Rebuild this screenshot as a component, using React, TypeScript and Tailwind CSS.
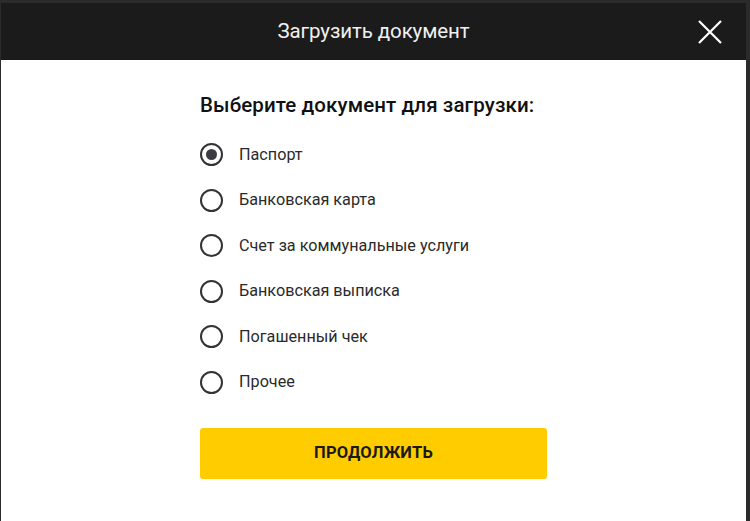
import React from 'react'

const options = [
    'Паспорт',
    'Банковская карта',
    'Счет за коммунальные услуги',
    'Банковская выписка',
    'Погашенный чек',
    'Прочее',
]

const App = () => {
    const [selected, setSelected] = React.useState(0)

    return (
        <div className="w-[750px] h-[521px] bg-[#2b2b2b] pt-[3px] pl-px pr-[4px] font-['Roboto',sans-serif]">
            <div className="h-full bg-white flex flex-col">
                <div className="h-[57px] bg-[#1b1b1b] flex items-center justify-center relative shrink-0">
                    <h2 className="text-[20.5px] text-[#f0f0f0] tracking-[-0.1px]">Загрузить документ</h2>
                    <button className="absolute right-[24px] top-[17px] w-[24px] h-[24px] text-white">
                        <svg viewBox="0 0 24 24" width="24" height="24" fill="none" stroke="currentColor" strokeWidth="2.2">
                            <path d="M1 1 L23 23 M23 1 L1 23" />
                        </svg>
                    </button>
                </div>
                <div className="pl-[199px] pt-[31px] w-[547px] box-content">
                    <h3 className="text-[20.5px] font-medium text-[#111] leading-[28px] tracking-[0.1px]">Выберите документ для загрузки:</h3>
                    <div className="mt-[13px] flex flex-col">
                        {options.map((label, i) => (
                            <label key={label} className="flex items-center h-[45.5px] cursor-pointer" onClick={() => setSelected(i)}>
                                <span className="w-[23px] h-[23px] rounded-full border-2 border-[#333] flex items-center justify-center shrink-0">
                                    {selected === i && <span className="w-[11px] h-[11px] rounded-full bg-[#3c3c44]" />}
                                </span>
                                <span className="ml-[16px] text-[16.2px] text-[#2a2a2a]">{label}</span>
                            </label>
                        ))}
                    </div>
                    <button className="mt-[23px] w-[347px] h-[51px] bg-[#ffcc00] rounded-[3px] text-[16.5px] font-bold text-[#1a1a1a] tracking-[0.2px]">
                        ПРОДОЛЖИТЬ
                    </button>
                </div>
            </div>
        </div>
    )
}

export default App
